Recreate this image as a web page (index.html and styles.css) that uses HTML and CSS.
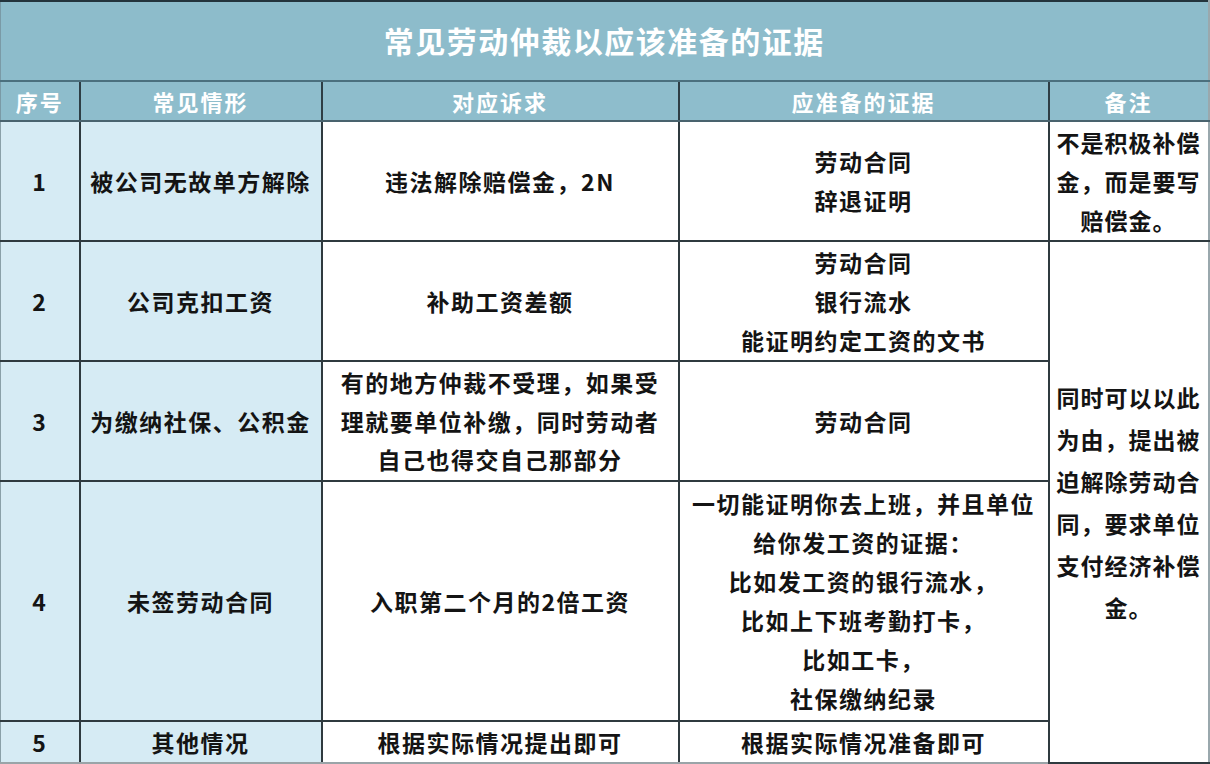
FILE: index.html
```html
<!DOCTYPE html>
<html lang="zh-CN">
<head>
<meta charset="utf-8">
<title>常见劳动仲裁以应该准备的证据</title>
<link rel="stylesheet" href="styles.css">
</head>
<body>
<table class="sheet">
  <colgroup>
    <col class="c1"><col class="c2"><col class="c3"><col class="c4"><col class="c5">
  </colgroup>
  <thead>
    <tr class="title-row"><th colspan="5">常见劳动仲裁以应该准备的证据</th></tr>
    <tr class="head-row">
      <th>序号</th><th>常见情形</th><th>对应诉求</th><th>应准备的证据</th><th>备注</th>
    </tr>
  </thead>
  <tbody>
    <tr class="r1">
      <td class="blue">1</td>
      <td class="blue">被公司无故单方解除</td>
      <td>违法解除赔偿金，2N</td>
      <td>劳动合同<br>辞退证明</td>
      <td class="note">不是积极补偿<br>金，而是要写<br>赔偿金。</td>
    </tr>
    <tr class="r2">
      <td class="blue">2</td>
      <td class="blue">公司克扣工资</td>
      <td>补助工资差额</td>
      <td>劳动合同<br>银行流水<br>能证明约定工资的文书</td>
      <td class="note big" rowspan="4">同时可以以此<br>为由，提出被<br>迫解除劳动合<br>同，要求单位<br>支付经济补偿<br>金。</td>
    </tr>
    <tr class="r3">
      <td class="blue">3</td>
      <td class="blue">为缴纳社保、公积金</td>
      <td class="tight">有的地方仲裁不受理，如果受<br>理就要单位补缴，同时劳动者<br>自己也得交自己那部分</td>
      <td>劳动合同</td>
    </tr>
    <tr class="r4">
      <td class="blue">4</td>
      <td class="blue">未签劳动合同</td>
      <td>入职第二个月的2倍工资</td>
      <td>一切能证明你去上班，并且单位<br>给你发工资的证据：<br>比如发工资的银行流水，<br>比如上下班考勤打卡，<br>比如工卡，<br>社保缴纳纪录</td>
    </tr>
    <tr class="r5">
      <td class="blue">5</td>
      <td class="blue">其他情况</td>
      <td>根据实际情况提出即可</td>
      <td>根据实际情况准备即可</td>
    </tr>
  </tbody>
</table>
</body>
</html>
```

FILE: styles.css
```css
html, body {
  margin: 0;
  padding: 0;
  background: #ffffff;
}

body {
  font-family: "Noto Sans CJK SC", "Noto Sans", sans-serif;
  color: #111111;
}

.sheet {
  width: 1208px;
  border-collapse: collapse;
  table-layout: fixed;
}

.c1 { width: 79px; }
.c2 { width: 242px; }
.c3 { width: 357px; }
.c4 { width: 370px; }
.c5 { width: 160px; }

.title-row th {
  height: 75px;
  background: #8dbccb;
  color: #ffffff;
  font-size: 30px;
  font-weight: 700;
  letter-spacing: 1.5px;
  line-height: 40px;
  border-top: 2px solid #23343c;
  border-left: 1px solid #7a9aa6;
  border-right: 2px solid #9aa8ad;
  border-bottom: 2px solid #4b707e;
  padding: 0 0 3px 0;
  text-align: center;
}

.head-row th {
  height: 38px;
  background: #8ebdcc;
  color: #ffffff;
  font-size: 22px;
  font-weight: 700;
  letter-spacing: 2px;
  line-height: 30px;
  border: 2px solid #2e3e45;
  border-top: 2px solid #4b707e;
  border-bottom: 2px solid #49636e;
  padding: 0;
  text-align: center;
}

.head-row th:first-child { border-left: 1px solid #7a9aa6; }
.head-row th:last-child { border-right: 2px solid #9aa8ad; }

tbody td {
  border: 2px solid #2f3a3f;
  padding: 0;
  text-align: center;
  vertical-align: middle;
  font-size: 23px;
  font-weight: 700;
  letter-spacing: 1.5px;
  line-height: 39px;
  background: #ffffff;
  color: #141414;
}

tbody td:first-child { border-left: 1px solid #8aa0a8; }
tbody td:last-child { border-right: 2px solid #9aa8ad; }
tbody tr:last-child td { border-bottom: 2px solid #9aa4a8; }

tbody td.blue { background: #d6ebf4; }

.tight { line-height: 38.5px; }

.note {
  letter-spacing: 1px;
}

.note.big { line-height: 42px; }

.r1 td { height: 118px; }
.r2 td { height: 118px; }
.r3 td { height: 118px; }
.r4 td { height: 238px; }
.r5 td { height: 40px; }
```
